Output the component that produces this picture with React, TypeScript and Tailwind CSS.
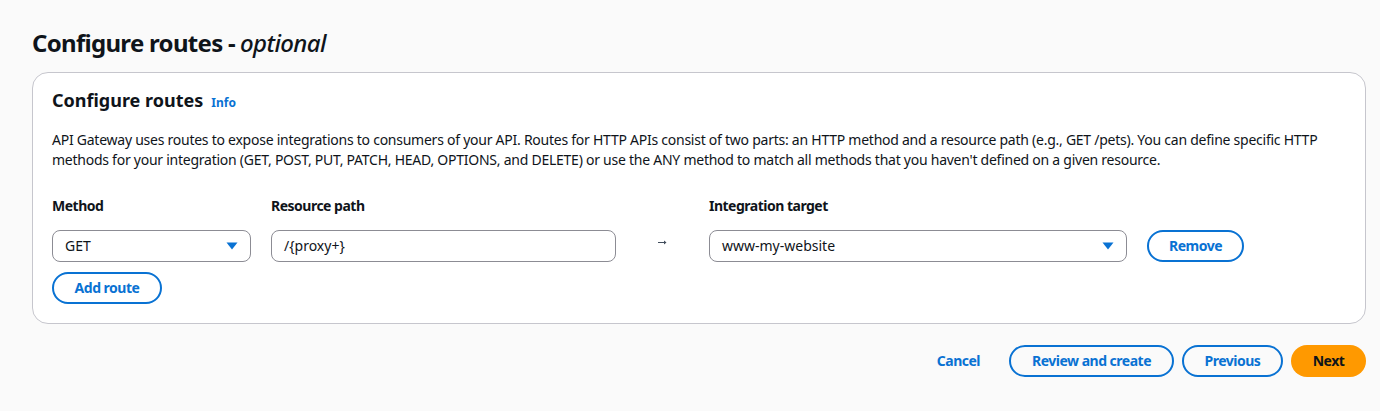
function Caret() {
  return (
    <svg width="12" height="8" viewBox="0 0 12 8" className="shrink-0">
      <path d="M0.5 0.5h11L6 7.5z" fill="#0972d3" />
    </svg>
  )
}

function Arrow() {
  return (
    <svg width="9" height="5" viewBox="0 0 9 5">
      <path d="M0 2.5h7.5" stroke="#414d5c" strokeWidth="1" />
      <path d="M6 0.5l2.5 2-2.5 2z" fill="#414d5c" />
    </svg>
  )
}

const outlineBtn =
  'flex h-8 items-center justify-center rounded-full border-2 border-[#0972d3] text-sm font-bold tracking-[-0.5px] text-[#0972d3]'
const label = 'mb-[14px] text-sm font-bold leading-5 tracking-[-0.5px]'
const field = 'flex h-8 items-center rounded-lg border border-[#8c8c94] px-3 text-sm'

export default function App() {
  return (
    <div className="min-h-[411px] bg-[#fafafa] pl-8 pr-[14px] pt-[26px] text-[#0f141a] font-['Noto_Sans',sans-serif]">
      <h1 className="text-2xl font-bold leading-[34px] tracking-[-0.7px]">
        Configure routes -<span className="ml-[5px] italic font-medium tracking-[-0.6px]">optional</span>
      </h1>

      <div className="mt-[12px] rounded-2xl border border-[#c6c6cd] bg-white px-[19px] pt-[15px] pb-[19px]">
        <div className="flex items-baseline gap-2">
          <h2 className="text-lg font-bold leading-6">Configure routes</h2>
          <a className="text-xs font-bold text-[#0972d3]">Info</a>
        </div>
        <p className="mt-[18px] text-sm leading-5 tracking-[-0.25px] text-[#0f141a]">
          API Gateway uses routes to expose integrations to consumers of your API. Routes for HTTP APIs consist of two parts: an HTTP method and a resource path (e.g., GET /pets). You can define specific HTTP methods for your integration (GET, POST, PUT, PATCH, HEAD, OPTIONS, and DELETE) or use the ANY method to match all methods that you haven't defined on a given resource.
        </p>

        <div className="mt-[26px] flex items-end">
          <div className="w-[199px]">
            <div className={label}>Method</div>
            <div className={field + ' justify-between'}>
              <span>GET</span>
              <Caret />
            </div>
          </div>
          <div className="ml-5 w-[345px]">
            <div className={label}>Resource path</div>
            <div className={field}>/{'{'}proxy+{'}'}</div>
          </div>
          <div className="flex h-8 w-[93px] items-center justify-center pb-[8px]">
            <Arrow />
          </div>
          <div className="w-[418px]">
            <div className={label}>Integration target</div>
            <div className={field + ' justify-between'}>
              <span>www-my-website</span>
              <Caret />
            </div>
          </div>
          <button className={outlineBtn + ' ml-5 w-[97px]'}>Remove</button>
        </div>
        <button className={outlineBtn + ' mt-[10px] w-[110px]'}>Add route</button>
      </div>

      <div className="mt-[21px] flex items-center justify-end gap-2">
        <button className="mr-[17px] px-1 text-sm font-bold tracking-[-0.5px] text-[#0972d3]">Cancel</button>
        <button className={outlineBtn + ' w-[165px]'}>Review and create</button>
        <button className={outlineBtn + ' w-[101px]'}>Previous</button>
        <button className="flex h-8 w-[75px] items-center justify-center rounded-full bg-[#ff9900] text-sm font-bold tracking-[-0.5px] text-[#0f141a]">
          Next
        </button>
      </div>
    </div>
  )
}
